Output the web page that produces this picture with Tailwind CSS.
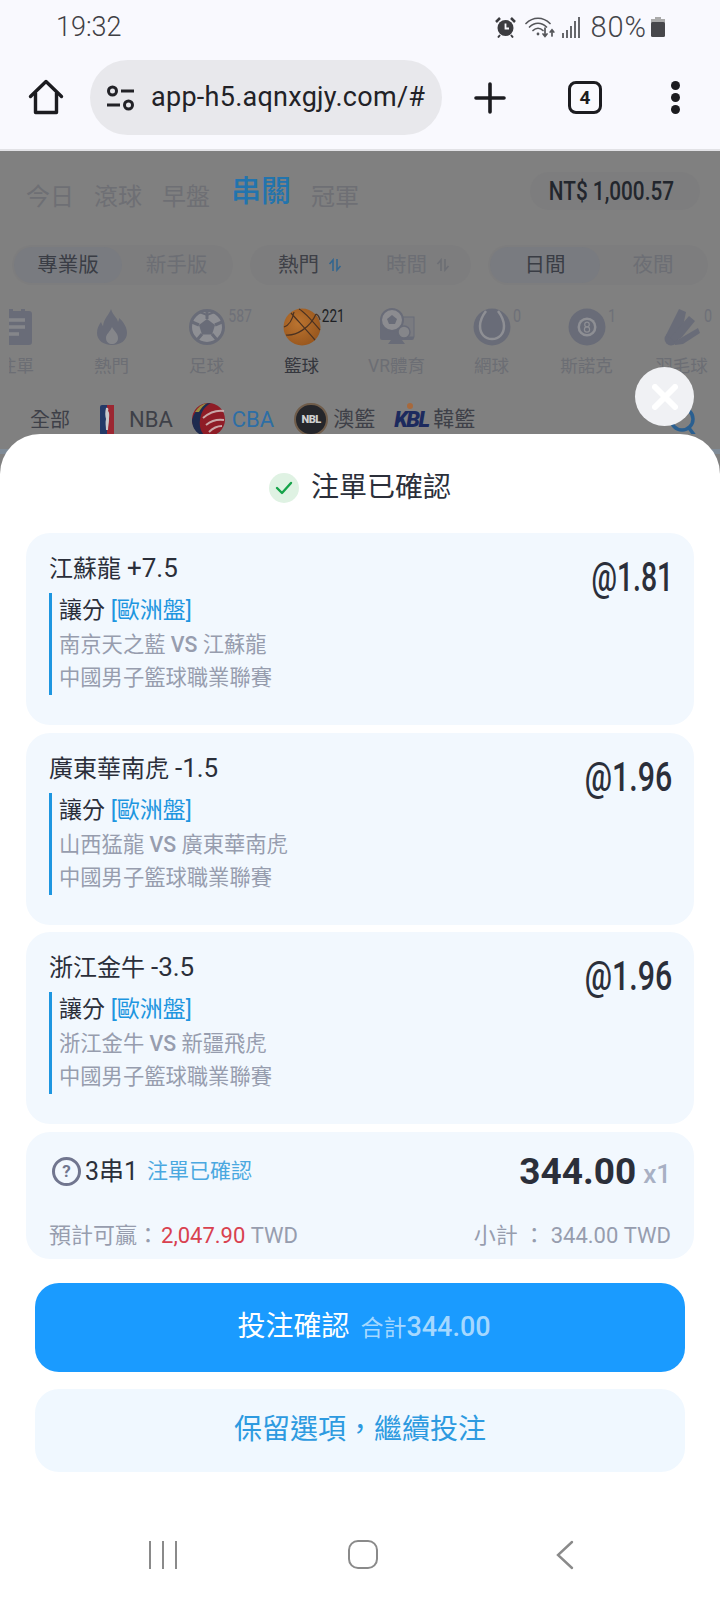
<!DOCTYPE html>
<html lang="zh-Hant">
<head>
<meta charset="utf-8">
<script src="https://cdn.jsdelivr.net/npm/@tailwindcss/browser@4"></script>
</head>
<body class="m-0">
<div class="w-[720px] h-[1600px] overflow-hidden flex flex-col relative bg-[#808080] font-[Roboto,'Noto_Sans_CJK_TC',sans-serif]">

  <!-- status bar -->
  <div class="h-[54px] bg-[#f9f9fe] flex items-center pl-[56px] pr-[55px] shrink-0">
    <span class="text-[27px] font-light text-[#3f4044] leading-none">19:32</span>
    <div class="ml-auto flex items-center">
      <svg width="21" height="22" viewBox="0 0 21 22" class="mr-[9px]"><circle cx="10.5" cy="12" r="8" fill="#3c3c40"/><path d="M10.5 7.5V12.5H14" stroke="#f9f9fe" stroke-width="1.8" fill="none"/><path d="M1 6l4-4M20 6l-4-4" stroke="#3c3c40" stroke-width="2.5"/><path d="M5 19l-2 2.5M16 19l2 2.5" stroke="#3c3c40" stroke-width="2"/></svg>
      <svg width="31" height="24" viewBox="0 0 31 24" class="mr-[6px]" fill="none" stroke="#55565a" stroke-width="1.7" stroke-linecap="round"><path d="M1 8.5C8 1.5 18 1.5 25 8.5"/><path d="M4.5 12C9.5 7 16.5 7 21.5 12"/><path d="M8 15.5C11 12.5 15 12.5 18 15.5"/><circle cx="13" cy="19" r="1.4" fill="#55565a" stroke="none"/><path d="M20 13v8M18 19l2 2.5 2-2.5"/><path d="M27 21v-6M25.2 17l1.8-2.2 1.8 2.2"/></svg>
      <div class="flex items-end gap-[2px] h-[22px] mr-[10px]">
        <i class="block w-[2px] h-[5px] bg-[#66676b]"></i><i class="block w-[2px] h-[8px] bg-[#66676b]"></i><i class="block w-[2px] h-[12px] bg-[#66676b]"></i><i class="block w-[2px] h-[17px] bg-[#66676b]"></i><i class="block w-[2px] h-[21px] bg-[#66676b]"></i>
      </div>
      <span class="text-[29px] font-light tracking-[1px] text-[#44454a] leading-none">80%</span>
      <svg width="14" height="20" viewBox="0 0 14 20" class="ml-[4px]"><rect x="4" y="0" width="6" height="3" fill="#aaa"/><rect x="0" y="2" width="14" height="5" fill="#aaa"/><rect x="0" y="5" width="14" height="15" rx="1.5" fill="#47474b"/></svg>
    </div>
  </div>

  <!-- browser toolbar -->
  <div class="h-[97px] bg-[#f9f9fe] border-b-2 border-[#e2e2e6] flex items-start shrink-0 relative">
    <svg width="36" height="36" viewBox="0 0 36 36" class="ml-[28px] mt-[25px] shrink-0" fill="none" stroke="#1c1c20" stroke-width="3.4" stroke-linejoin="round" stroke-linecap="round"><path d="M2.5 17.5L18 2.5l15.5 15"/><path d="M7.5 14v19.5h21V14"/></svg>
    <div class="ml-[26px] mt-[6px] w-[352px] h-[75px] rounded-full bg-[#e8e8ec] flex items-center shrink-0">
      <svg width="29" height="28" viewBox="0 0 29 28" class="ml-[16px] shrink-0" fill="none" stroke="#222227" stroke-width="3"><circle cx="6.5" cy="7" r="4"/><path d="M15 7h13"/><circle cx="22.5" cy="21" r="4"/><path d="M1 21h13"/></svg>
      <span class="ml-[16px] text-[27px] tracking-[0.01em] text-[#222227] leading-none whitespace-nowrap">app-h5.aqnxgjy.com/#</span>
    </div>
    <svg width="32" height="32" viewBox="0 0 32 32" class="ml-[32px] mt-[28px] shrink-0" stroke="#1c1c20" stroke-width="3.6" stroke-linecap="round"><path d="M16 2v28M2 16h28"/></svg>
    <div class="ml-[62px] mt-[27px] w-[34px] h-[33px] border-[3.5px] border-[#1c1c20] rounded-[8px] flex items-center justify-center text-[19px] font-bold text-[#1c1c20] leading-none shrink-0">4</div>
    <div class="ml-[69px] mt-[27px] flex flex-col gap-[3px] shrink-0">
      <i class="block w-[9px] h-[9px] rounded-full bg-[#1c1c20]"></i><i class="block w-[9px] h-[9px] rounded-full bg-[#1c1c20]"></i><i class="block w-[9px] h-[9px] rounded-full bg-[#1c1c20]"></i>
    </div>
  </div>

  <!-- dimmed page behind the sheet -->
  <div class="h-[283px] shrink-0 relative overflow-hidden bg-[#808080]">
    <div class="h-[80px] flex items-center pl-[26px] text-[#6e6f74]">
      <span class="text-[24px] leading-none mt-[12px]">今日</span>
      <span class="text-[24px] leading-none mt-[12px] ml-[20px]">滾球</span>
      <span class="text-[24px] leading-none mt-[12px] ml-[20px]">早盤</span>
      <span class="text-[30px] leading-none font-medium text-[#2274ae] ml-[21px]">串關</span>
      <span class="text-[24px] leading-none mt-[12px] ml-[20px]">冠軍</span>
      <div class="ml-auto mr-[20px] w-[170px] h-[38px] rounded-full bg-[#7d7d7e] flex items-center justify-center">
        <span class="text-[25px] font-medium text-[#22262d] leading-none scale-x-[.83] -ml-[8px] whitespace-nowrap">NT$ 1,000.57</span>
      </div>
    </div>
    <div class="mt-[14px] h-[40px] flex pl-[12px] gap-[17px] text-[20.5px] leading-none">
      <div class="w-[221px] rounded-full bg-[#7d7d7e] flex p-[2px]">
        <div class="w-[108px] rounded-full bg-[#797b80] flex items-center justify-center text-[#3a3d45]">專業版</div>
        <div class="flex-1 flex items-center justify-center text-[#6c6e74]">新手版</div>
      </div>
      <div class="w-[221px] rounded-full bg-[#7d7d7e] flex items-center text-[#3e4047]">
        <span class="ml-[28px]">熱門</span>
        <svg width="14" height="14" viewBox="0 0 14 14" class="ml-[9px]" fill="none" stroke="#33668f" stroke-width="1.6"><path d="M5 13V2L1.5 6M9 1v11l3.5-4"/></svg>
        <span class="ml-[44px] text-[#6c6e74]">時間</span>
        <svg width="14" height="14" viewBox="0 0 14 14" class="ml-[9px]" fill="none" stroke="#6c6e74" stroke-width="1.6"><path d="M5 13V2L1.5 6M9 1v11l3.5-4"/></svg>
      </div>
      <div class="w-[220px] rounded-full bg-[#7d7d7e] flex p-[2px]">
        <div class="w-[110px] rounded-full bg-[#797b80] flex items-center justify-center text-[#3a3d45]">日間</div>
        <div class="flex-1 flex items-center justify-center text-[#6c6e74]">夜間</div>
      </div>
    </div>

    <div class="ml-[9px] mt-[18px] pt-[4px] overflow-hidden">
      <div class="flex -ml-[40px] w-[800px] text-[17.5px] leading-none text-[#6c6e74] pt-[1px]">
        <div class="w-[95px] shrink-0 flex flex-col items-center">
          <svg width="38" height="38" viewBox="0 0 38 38"><path d="M7 3h4v-2h4v2h8v-2h4v2h4a3 3 0 0 1 3 3v28a3 3 0 0 1-3 3H7a3 3 0 0 1-3-3V6a3 3 0 0 1 3-3z" fill="#696c78"/><path d="M10 12h17M10 19h17M10 26h11" stroke="#85868a" stroke-width="3.5"/></svg>
          <span class="mt-[12px]">注單</span>
        </div>
        <div class="w-[95px] shrink-0 flex flex-col items-center">
          <svg width="32" height="38" viewBox="0 0 32 38"><path d="M15 1c2 7 6 8 7 13 1-2 1-3 1-4 5 4 8 10 8 15 0 7-6 12-15 12S1 32 1 25c0-5 2-8 4-11 1 2 1 3 2 4 1-8 6-11 8-17z" fill="#696c78"/><path d="M16 19c2 4 6 6 6 11 0 4-3 6-6 6s-6-2-6-6c0-4 4-6 6-11z" fill="#85868a"/></svg>
          <span class="mt-[12px]">熱門</span>
        </div>
        <div class="w-[95px] shrink-0 flex flex-col items-center relative">
          <svg width="36" height="38" viewBox="0 0 36 36"><circle cx="18" cy="18" r="16.5" fill="#8e8f94" stroke="#696c78" stroke-width="3"/><path d="M18 10l8 6-3 9.5H13L10 16z" fill="#696c78"/><path d="M18 10V3M26 16l7-3M23 25l5 6M13 25l-5 6M10 16l-7-3" stroke="#696c78" stroke-width="3"/><path d="M11 2l7 3 7-3 1 2-8 3-8-3z" fill="#696c78"/></svg>
          <span class="mt-[12px]">足球</span>
          <span class="absolute left-[66px] top-[-1px] text-[18px] scale-x-[.78] text-[#6e7078]">587</span>
        </div>
        <div class="w-[95px] shrink-0 flex flex-col items-center relative text-[#34363d]">
          <svg width="38" height="38" viewBox="0 0 38 38"><defs><radialGradient id="bb" cx=".4" cy=".4" r=".7"><stop offset="0" stop-color="#bb7430"/><stop offset="1" stop-color="#95541c"/></radialGradient></defs><circle cx="19" cy="19" r="18.5" fill="url(#bb)"/><path d="M1 19c3-1 8-5 10-15M8 5c8 9 18 20 24 27M3 27c10 1 24-7 30-21M16 1c6 3 15 14 21 21M33 6c3 1 3 3 4 6" stroke="#4a3222" stroke-width="1.2" fill="none"/></svg>
          <span class="mt-[12px]">籃球</span>
          <span class="absolute left-[64px] top-[-1px] text-[18px] scale-x-[.75] text-[#1d1f24]">221</span>
        </div>
        <div class="w-[95px] shrink-0 flex flex-col items-center">
          <svg width="36" height="38" viewBox="0 0 36 38"><rect x="1" y="12" width="34" height="20" rx="2" fill="#696c78"/><path d="M12 32h11l3 4H9z" fill="#696c78"/><rect x="20" y="9" width="15" height="20" fill="#7a7b80" stroke="#696c78"/><circle cx="13" cy="12" r="11" fill="#8c8c90" stroke="#696c78" stroke-width="2"/><path d="M13 7l5 4-2 5h-6l-2-5z" fill="#696c78"/><circle cx="25" cy="24" r="6" fill="#85868a" stroke="#696c78" stroke-width="1.5"/></svg>
          <span class="mt-[12px]">VR體育</span>
        </div>
        <div class="w-[95px] shrink-0 flex flex-col items-center relative">
          <svg width="38" height="38" viewBox="0 0 38 38"><circle cx="19" cy="19" r="18.5" fill="#696c78"/><path d="M13 3c-3 4-6 9-6 15 0 8 5 13 12 13s12-5 12-13c0-6-3-11-6-15" fill="none" stroke="#8e8f94" stroke-width="2.5"/></svg>
          <span class="mt-[12px]">網球</span>
          <span class="absolute left-[68px] top-[-1px] text-[18px] scale-x-[.8] text-[#6e7078]">0</span>
        </div>
        <div class="w-[95px] shrink-0 flex flex-col items-center relative">
          <svg width="38" height="38" viewBox="0 0 38 38"><circle cx="19" cy="19" r="18.5" fill="#696c78"/><circle cx="19" cy="19" r="9.5" fill="#8e8f94"/><circle cx="19" cy="19" r="7" fill="#696c78"/><circle cx="19" cy="16.5" r="2.3" fill="none" stroke="#8e8f94" stroke-width="1.2"/><circle cx="19" cy="21.5" r="2.6" fill="none" stroke="#8e8f94" stroke-width="1.2"/></svg>
          <span class="mt-[12px]">斯諾克</span>
          <span class="absolute left-[68px] top-[-1px] text-[18px] scale-x-[.8] text-[#6e7078]">1</span>
        </div>
        <div class="w-[95px] shrink-0 flex flex-col items-center relative">
          <svg width="36" height="38" viewBox="0 0 36 38"><circle cx="7" cy="31" r="6.5" fill="#696c78"/><path d="M2 27L15 1l7 3-4 19-9 9z" fill="#696c78"/><path d="M6 30L25 8l6 5-13 16-7 5z" fill="#696c78"/><path d="M10 34l24-14 2 5-17 11-8 1z" fill="#696c78"/></svg>
          <span class="mt-[12px]">羽毛球</span>
          <span class="absolute left-[69px] top-[-1px] text-[18px] scale-x-[.8] text-[#6e7078]">0</span>
        </div>
      </div>
    </div>

    <div class="mt-[27px] flex items-center pl-[30px] h-[34px] text-[#3e4048] leading-none">
      <span class="text-[20px]">全部</span>
      <svg width="14" height="30" viewBox="0 0 14 30" class="ml-[30px]"><rect x="0" y="0" width="14" height="30" rx="2" fill="#243a68"/><path d="M7 0h7v30H7z" fill="#9c2732"/><path d="M6 3c2-1 3 1 2 3 2 2 1 6 1 9 0 3-1 6-1 10H6c0-4-1-7 0-11-1-3-1-7 0-11z" fill="#c9c9cb"/></svg>
      <span class="ml-[15px] text-[22px]">NBA</span>
      <svg width="33" height="33" viewBox="0 0 33 33" class="ml-[19px]"><circle cx="16.5" cy="16.5" r="16.5" fill="#8f1c26"/><path d="M0 17C3 6 11 0 19 0c-7 4-10 9-11 17-1 7 1 12 5 16C5 32 0 25 0 17z" fill="#1e2b4f"/><path d="M3 9c3-5 7-8 12-9-3 2-6 5-8 9z" fill="#9b8a3c"/><path d="M11 15c7-6 14-8 21-7M14 22c5-4 11-6 18-5M17 29c4-4 8-6 13-6" stroke="#c9a7a7" stroke-width="2" fill="none"/></svg>
      <span class="ml-[7px] text-[22px] text-[#2d6ea5]">CBA</span>
      <div class="ml-[20px] w-[34px] h-[33px] rounded-full bg-[#25262b] border-[2px] border-[#6f5c4a] flex items-center justify-center text-[11px] font-black text-[#cfcfcf] tracking-[-0.5px]">NBL</div>
      <span class="ml-[5px] text-[21px]">澳籃</span>
      <div class="ml-[19px] w-[32px] relative text-center text-[22px] font-black italic text-[#1c2a5e] tracking-[-1.5px]">KBL<i class="absolute left-[13px] -top-[6px] block w-[6px] h-[6px] rounded-full bg-[#a7693c]"></i></div>
      <span class="ml-[7px] text-[21px]">韓籃</span>
      <svg width="28" height="32" viewBox="0 0 28 32" class="ml-auto mr-[23px] mt-[6px]" fill="none" stroke="#2a5f90" stroke-width="3.5"><circle cx="13" cy="12" r="11"/><path d="M20 21l6 8"/></svg>
    </div>
  </div>

  <!-- bottom sheet, with the page's divider showing at its corners -->
  <div class="flex-1 relative bg-[#808080]">
    <div class="absolute left-0 right-0 top-[15px] h-[5px] bg-[#7f8b97]"></div>
    <div class="relative h-full bg-white rounded-t-[40px] flex flex-col">
      <div class="h-[99px] shrink-0 flex items-center justify-center pt-[9px]">
        <span class="w-[30px] h-[30px] rounded-full bg-[#dff2e3] flex items-center justify-center shrink-0">
          <svg width="18" height="14" viewBox="0 0 18 14" fill="none" stroke="#16a34a" stroke-width="2.4" stroke-linecap="round" stroke-linejoin="round"><path d="M2 7l5 5 9-10"/></svg>
        </span>
        <span class="ml-[12px] text-[28px] text-[#2b2f3a] leading-none">注單已確認</span>
      </div>

      <div class="mx-[26px] flex flex-col gap-[7.5px] text-[#2b2f3a]">
        <div class="h-[192px] rounded-[24px] bg-[#f2f8fe] pl-[23px] pr-[21px] pt-[20px] flex justify-between">
          <div>
            <div class="text-[24px] leading-[30px]">江蘇龍 <span class="text-[26px]">+7.5</span></div>
            <div class="mt-[9px] border-l-[3px] border-[#1e96e0] pl-[7px] text-[21.3px] leading-[34px]">
              <div class="text-[23px] leading-[36px]">讓分 <span class="text-[#1e96e0]">[歐洲盤]</span></div>
              <div class="text-[#979dae] leading-[32px]">南京天之藍 <span class="font-medium">VS</span> 江蘇龍</div>
              <div class="text-[#979dae]">中國男子籃球職業聯賽</div>
            </div>
          </div>
          <span class="text-[40px] font-medium leading-none mt-[5px] scale-x-[.71] origin-right whitespace-nowrap">@1.81</span>
        </div>
        <div class="h-[192px] rounded-[24px] bg-[#f2f8fe] pl-[23px] pr-[22px] pt-[20px] flex justify-between">
          <div>
            <div class="text-[24px] leading-[30px]">廣東華南虎 <span class="text-[26px]">-1.5</span></div>
            <div class="mt-[9px] border-l-[3px] border-[#1e96e0] pl-[7px] text-[21.3px] leading-[34px]">
              <div class="text-[23px] leading-[36px]">讓分 <span class="text-[#1e96e0]">[歐洲盤]</span></div>
              <div class="text-[#979dae] leading-[32px]">山西猛龍 <span class="font-medium">VS</span> 廣東華南虎</div>
              <div class="text-[#979dae]">中國男子籃球職業聯賽</div>
            </div>
          </div>
          <span class="text-[40px] font-medium leading-none mt-[5px] scale-x-[.76] origin-right whitespace-nowrap">@1.96</span>
        </div>
        <div class="h-[192px] rounded-[24px] bg-[#f2f8fe] pl-[23px] pr-[22px] pt-[20px] flex justify-between">
          <div>
            <div class="text-[24px] leading-[30px]">浙江金牛 <span class="text-[26px]">-3.5</span></div>
            <div class="mt-[9px] border-l-[3px] border-[#1e96e0] pl-[7px] text-[21.3px] leading-[34px]">
              <div class="text-[23px] leading-[36px]">讓分 <span class="text-[#1e96e0]">[歐洲盤]</span></div>
              <div class="text-[#979dae] leading-[32px]">浙江金牛 <span class="font-medium">VS</span> 新疆飛虎</div>
              <div class="text-[#979dae]">中國男子籃球職業聯賽</div>
            </div>
          </div>
          <span class="text-[40px] font-medium leading-none mt-[5px] scale-x-[.76] origin-right whitespace-nowrap">@1.96</span>
        </div>

        <div class="h-[127px] rounded-[24px] bg-[#f2f8fe] pl-[23px] pr-[23px] flex flex-col">
          <div class="h-[80px] flex items-center pl-[3px]">
            <span class="w-[29px] h-[29px] rounded-full border-[3px] border-[#71768f] flex items-center justify-center text-[17px] font-bold text-[#71768f] leading-none">?</span>
            <span class="ml-[4px] text-[25px] leading-none">3串1</span>
            <span class="ml-[9px] text-[21px] text-[#4aa8e0] leading-none">注單已確認</span>
            <span class="ml-auto text-[37px] font-bold leading-none">344.00</span>
            <span class="ml-[7px] mt-[5px] text-[26px] font-medium text-[#a8b0c4] leading-none">x1</span>
          </div>
          <div class="flex items-center justify-between text-[22px] leading-none text-[#979dae] mt-[13px]">
            <span>預計可贏：<span class="text-[#d9414f] ml-[2px]">2,047.90</span> TWD</span>
            <span>小計 ： 344.00 TWD</span>
          </div>
        </div>
      </div>

      <div class="mx-[35px] mt-[24px] h-[89px] rounded-[24px] bg-[#1a9bff] flex items-center justify-center pl-[8px] shrink-0">
        <span class="text-[28px] text-white leading-none">投注確認</span>
        <span class="ml-[11px] text-[23px] text-[#a5d8ff] leading-none">合計<span class="text-[27px] font-medium">344.00</span></span>
      </div>
      <div class="mx-[35px] mt-[17px] h-[83px] rounded-[24px] bg-[#f0f8ff] flex items-center justify-center text-[28px] text-[#2d9ae0] leading-none shrink-0">保留選項，繼續投注</div>

      <div class="mt-[69px] h-[28px] flex items-center shrink-0">
        <div class="ml-[149px] flex gap-[11px]">
          <i class="block w-[2px] h-[28px] bg-[#8a8a8a]"></i><i class="block w-[2px] h-[28px] bg-[#8a8a8a]"></i><i class="block w-[2px] h-[28px] bg-[#8a8a8a]"></i>
        </div>
        <div class="ml-[171px] w-[30px] h-[29px] rounded-[10px] border-[2.5px] border-[#8a8a8a]"></div>
        <svg width="18" height="30" viewBox="0 0 18 30" class="ml-[178px]" fill="none" stroke="#8a8a8a" stroke-width="2.4" stroke-linecap="round"><path d="M16 2L2 15l14 13"/></svg>
      </div>
    </div>
  </div>

  <!-- close button over the sheet edge -->
  <div class="absolute left-[635px] top-[367px] w-[59px] h-[59px] rounded-full bg-[#f0f1f4] flex items-center justify-center">
    <svg width="26" height="26" viewBox="0 0 26 26" stroke="#fff" stroke-width="6" stroke-linecap="round"><path d="M3 3l20 20M23 3L3 23"/></svg>
  </div>
</div>
</body>
</html>
